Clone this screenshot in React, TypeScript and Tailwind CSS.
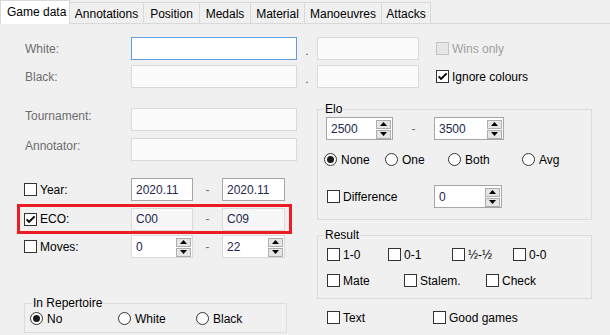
import React from 'react';

const tabs = [
  { label: 'Game data', w: 'w-[70px]', active: true },
  { label: 'Annotations', w: 'w-[74px]' },
  { label: 'Position', w: 'w-[56px]' },
  { label: 'Medals', w: 'w-[51px]' },
  { label: 'Material', w: 'w-[54px]' },
  { label: 'Manoeuvres', w: 'w-[77px]' },
  { label: 'Attacks', w: 'w-[49px]' },
];

function Box({ checked = false, disabled = false }: { checked?: boolean; disabled?: boolean }) {
  return (
    <span
      className={`flex h-[13px] w-[13px] shrink-0 items-center justify-center border ${
        disabled ? 'border-[#c4c4c4] bg-[#e6e6e6]' : 'border-[#333333] bg-white'
      }`}
    >
      {checked ? (
        <svg width="11" height="11" viewBox="0 0 11 11">
          <path d="M1.6 5.4 L4.1 8 L9.6 2.4" fill="none" stroke="#000" strokeWidth="1.9" />
        </svg>
      ) : null}
    </span>
  );
}

function Check({ label, checked, disabled, className = '' }: { label: string; checked?: boolean; disabled?: boolean; className?: string }) {
  return (
    <div className={`flex h-[13px] items-center gap-[3px] ${className}`}>
      <Box checked={checked} disabled={disabled} />
      <span className={disabled ? 'text-[#a0a0a0]' : 'text-black'}>{label}</span>
    </div>
  );
}

function Radio({ label, checked = false, className = '' }: { label: string; checked?: boolean; className?: string }) {
  return (
    <div className={`flex h-[13px] items-center gap-[4px] ${className}`}>
      <span className="flex h-[13px] w-[13px] shrink-0 items-center justify-center rounded-full border border-[#333333] bg-white">
        {checked ? <span className="h-[7px] w-[7px] rounded-full bg-[#1a1a1a]" /> : null}
      </span>
      <span>{label}</span>
    </div>
  );
}

function SpinBtn({ up }: { up?: boolean }) {
  return (
    <span className="flex h-[9px] w-[15px] items-center justify-center border border-[#adadad] bg-[#e5e5e5]">
      <svg width="7" height="4" viewBox="0 0 7 4">
        {up ? <polygon points="0,4 3.5,0 7,4" fill="#000" /> : <polygon points="0,0 3.5,4 7,0" fill="#000" />}
      </svg>
    </span>
  );
}

function Spin({ value, className }: { value: string; className: string }) {
  return (
    <div className={`flex h-[23px] items-center justify-between border pl-[4px] pr-[1px] text-[#1e2850] ${className}`}>
      <span>{value}</span>
      <span className="flex flex-col gap-px pt-px">
        <SpinBtn up />
        <SpinBtn />
      </span>
    </div>
  );
}

function Field({ value = '', className }: { value?: string; className: string }) {
  return <div className={`flex h-[23px] items-center border pl-[4px] text-[#1e2850] ${className}`}>{value}</div>;
}

function Dash({ className }: { className: string }) {
  return <span className={`text-center text-[#6d6d6d] ${className}`}>-</span>;
}

export default function App() {
  return (
    <div className="h-[335px] w-[610px] overflow-hidden bg-[#f0f0f0] font-['Liberation_Sans',Arial,sans-serif] text-[12px] leading-[14px] text-black">
      <div className="flex h-[24px] items-end border-b border-[#d9d9d9]">
        {tabs.map((t) =>
          t.active ? (
            <div key={t.label} className={`-mb-px flex h-[24px] items-start border border-b-0 border-[#d9d9d9] bg-white pl-[6px] pt-[4px] ${t.w}`}>
              {t.label}
            </div>
          ) : (
            <div key={t.label} className={`flex h-[21px] items-center justify-center border-t border-r border-[#d9d9d9] bg-[#f0f0f0] pt-px ${t.w}`}>
              {t.label}
            </div>
          ),
        )}
      </div>

      <div className="pt-[13px]">
        <div className="flex h-[23px] items-center">
          <span className="w-[131px] pl-[25px] text-[#6d6d6d]">White:</span>
          <Field className="w-[166px] border-[#5f9ddf] bg-white" />
          <span className="w-[20px] self-end pb-[2px] text-center text-[#5a4a7a]">.</span>
          <Field className="w-[102px] border-[#d9d9d9] bg-[#fbfbfb]" />
          <Check label="Wins only" disabled className="ml-[17px]" />
        </div>
        <div className="mt-[5px] flex h-[23px] items-center">
          <span className="w-[131px] pl-[25px] text-[#6d6d6d]">Black:</span>
          <Field className="w-[166px] border-[#d9d9d9] bg-[#fbfbfb]" />
          <span className="w-[20px] self-end pb-[2px] text-center text-[#5a4a7a]">.</span>
          <Field className="w-[102px] border-[#d9d9d9] bg-[#fbfbfb]" />
          <Check label="Ignore colours" checked className="ml-[17px]" />
        </div>
      </div>

      <div className="flex">
        <div className="w-[317px]">
          <div className="mt-[20px] flex h-[23px] items-center">
            <span className="w-[131px] pb-[7px] pl-[25px] text-[#6d6d6d]">Tournament:</span>
            <Field className="w-[166px] border-[#d9d9d9] bg-[#fbfbfb]" />
          </div>
          <div className="mt-[7px] flex h-[23px] items-center">
            <span className="w-[131px] pb-[7px] pl-[25px] text-[#6d6d6d]">Annotator:</span>
            <Field className="w-[166px] border-[#d9d9d9] bg-[#fbfbfb]" />
          </div>

          <div className="mt-[17px] flex h-[23px] items-center">
            <Check label="Year:" className="w-[131px] pl-[24px]" />
            <Field value="2020.11" className="w-[62px] border-[#a6a6a6] bg-white" />
            <Dash className="w-[29px]" />
            <Field value="2020.11" className="w-[63px] border-[#a6a6a6] bg-white" />
          </div>

          <div className="ml-[17px] mt-[3px] flex h-[30px] w-[275px] items-center border-[3px] border-[#ed1c24]">
            <Check label="ECO:" checked className="w-[111px] pl-[4px]" />
            <Field value="C00" className="w-[62px] border-[#d9d9d9] bg-[#f7f7f7]" />
            <Dash className="w-[29px]" />
            <Field value="C09" className="w-[63px] border-[#d9d9d9] bg-[#f7f7f7]" />
          </div>

          <div className="mt-[1px] flex h-[23px] items-center">
            <Check label="Moves:" className="w-[131px] pl-[24px]" />
            <Spin value="0" className="w-[62px] border-[#d9d9d9] bg-white" />
            <Dash className="w-[29px]" />
            <Spin value="22" className="w-[63px] border-[#d9d9d9] bg-white" />
          </div>

          <fieldset className="ml-[24px] mt-[38px] w-[263px] border border-[#dcdcdc] pb-[7px] pl-[5px]">
            <legend className="ml-[2px] px-px leading-[14px]">In Repertoire</legend>
            <div className="mt-[2px] flex items-center">
              <Radio label="No" checked className="w-[88px]" />
              <Radio label="White" className="w-[78px]" />
              <Radio label="Black" />
            </div>
          </fieldset>
        </div>

        <div className="w-[275px]">
          <fieldset className="mt-[14px] w-[275px] border border-[#dcdcdc] px-[8px] pb-[11px]">
            <legend className="-ml-[2px] px-px leading-[14px]">Elo</legend>
            <div className="mt-px flex items-center">
              <Spin value="2500" className="w-[67px] border-[#a6a6a6] bg-white" />
              <Dash className="w-[41px]" />
              <Spin value="3500" className="w-[70px] border-[#a6a6a6] bg-white" />
            </div>
            <div className="-ml-[2px] mt-[13px] flex items-center">
              <Radio label="None" checked className="w-[61px]" />
              <Radio label="One" className="w-[63px]" />
              <Radio label="Both" className="w-[74px]" />
              <Radio label="Avg" />
            </div>
            <div className="mt-[19px] flex items-center">
              <Check label="Difference" className="ml-px w-[107px]" />
              <Spin value="0" className="w-[68px] border-[#a6a6a6] bg-white" />
            </div>
          </fieldset>

          <fieldset className="mt-[8px] w-[275px] border border-[#dcdcdc] px-[8px] pb-[11px]">
            <legend className="-ml-[2px] px-px leading-[14px]">Result</legend>
            <div className="mt-[6px] flex items-center">
              <Check label="1-0" className="ml-px w-[61px]" />
              <Check label="0-1" className="w-[64px]" />
              <Check label="½-½" className="w-[61px]" />
              <Check label="0-0" />
            </div>
            <div className="mt-[13px] flex items-center">
              <Check label="Mate" className="ml-px w-[77px]" />
              <Check label="Stalem." className="w-[82px]" />
              <Check label="Check" />
            </div>
          </fieldset>

          <div className="mt-[12px] flex items-center pl-[10px]">
            <Check label="Text" className="w-[106px]" />
            <Check label="Good games" />
          </div>
        </div>
      </div>
    </div>
  );
}
